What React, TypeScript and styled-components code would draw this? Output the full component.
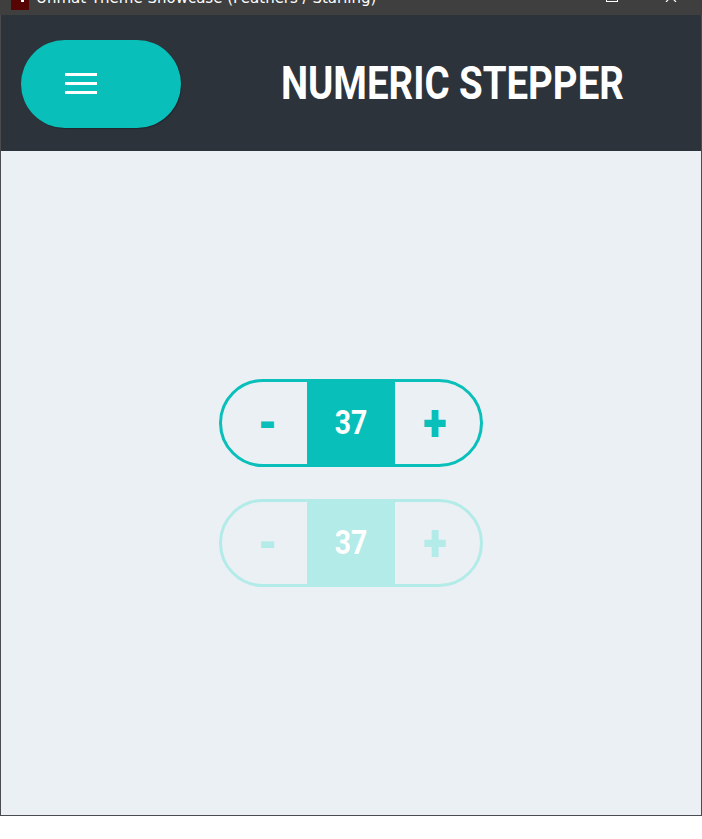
import React from "react";
import styled, { createGlobalStyle } from "styled-components";

const GlobalStyle = createGlobalStyle`
  html, body {
    margin: 0;
    padding: 0;
    background: #ffffff;
  }
  * {
    box-sizing: border-box;
  }
`;

const teal = "#08bfba";
const tealDisabled = "#b3ebe8";

const Window = styled.div`
  width: 702px;
  height: 816px;
  display: flex;
  flex-direction: column;
  font-family: Roboto, "Liberation Sans", sans-serif;
`;

const TitleBar = styled.div`
  height: 15px;
  background: #3f3f3f;
  display: flex;
  align-items: flex-start;
  overflow: hidden;
  padding-left: 11px;
`;

const AppIcon = styled.div`
  width: 18px;
  height: 18px;
  margin-top: -8px;
  background: #560404;
  position: relative;
  &::after {
    content: "";
    position: absolute;
    left: 10px;
    top: 7px;
    width: 3px;
    height: 3px;
    background: #ffffff;
  }
`;

const TitleText = styled.div`
  margin-left: 7px;
  margin-top: -12px;
  color: #ffffff;
  font-family: "DejaVu Sans", "Liberation Sans", sans-serif;
  font-size: 15px;
  line-height: 20px;
  white-space: nowrap;
`;

const Controls = styled.div`
  margin-left: auto;
  display: flex;
  align-items: flex-start;
  gap: 47px;
  padding-right: 25px;
  margin-top: -9px;
`;

const MaxBox = styled.div`
  width: 12px;
  height: 11px;
  border: 1px solid #ffffff;
`;

const CloseGlyph = styled.svg`
  width: 12px;
  height: 11px;
`;

const Frame = styled.div`
  flex: 1;
  display: flex;
  flex-direction: column;
  border: 1px solid #4a4c50;
  border-top: none;
`;

const Header = styled.header`
  height: 136px;
  background: #2c333b;
  display: flex;
  align-items: center;
  padding-left: 20px;
`;

const MenuButton = styled.button`
  width: 160px;
  height: 88px;
  border: none;
  border-radius: 44px;
  background: ${teal};
  box-shadow: 1px 1px 1px rgba(0, 0, 0, 0.25);
  display: flex;
  flex-direction: column;
  justify-content: center;
  gap: 6px;
  padding: 0 0 0 44px;
  margin-top: 1px;
  cursor: pointer;
`;

const MenuLine = styled.span`
  display: block;
  width: 32px;
  height: 3px;
  background: #ffffff;
`;

const TitleArea = styled.div`
  flex: 1;
  display: flex;
  justify-content: center;
  padding-left: 22px;
`;

const Title = styled.h1`
  margin: 0;
  color: #ffffff;
  font-family: Roboto, "Liberation Sans", sans-serif;
  font-weight: 700;
  font-size: 46px;
  line-height: 1;
  white-space: nowrap;
  display: inline-block;
  transform: scaleX(0.835);
`;

const Content = styled.main`
  flex: 1;
  background: #ebf0f4;
  display: flex;
  flex-direction: column;
  align-items: center;
  justify-content: center;
  gap: 32px;
  padding-bottom: 1px;
`;

const Stepper = styled.div<{ $disabled?: boolean }>`
  width: 264px;
  height: 88px;
  border: 3px solid ${(p) => (p.$disabled ? tealDisabled : teal)};
  border-radius: 44px;
  display: grid;
  grid-template-columns: 85px 88px 85px;
  overflow: hidden;
`;

const StepButton = styled.button<{ $disabled?: boolean; $side: "left" | "right" }>`
  border: none;
  background: transparent;
  color: ${(p) => (p.$disabled ? tealDisabled : teal)};
  font-family: Roboto, "Liberation Sans", sans-serif;
  cursor: ${(p) => (p.$disabled ? "default" : "pointer")};
  display: flex;
  align-items: center;
  justify-content: center;
  padding: 0;
  padding-${(p) => p.$side}: 6px;
  padding-top: 3px;
`;

const Sign = styled.span`
  display: inline-block;
  font-weight: 900;
  font-size: 52px;
  line-height: 1;
  transform: scaleX(0.84);
`;

const Value = styled.div<{ $disabled?: boolean }>`
  background: ${(p) => (p.$disabled ? tealDisabled : teal)};
  display: flex;
  align-items: center;
  justify-content: center;
`;

const ValueText = styled.span`
  display: inline-block;
  color: #ffffff;
  font-family: Roboto, "Liberation Sans", sans-serif;
  font-weight: 700;
  font-size: 33px;
  line-height: 1;
  transform: scaleX(0.86);
`;

const NumericStepper: React.FC<{ value: number; disabled?: boolean }> = ({ value, disabled }) => (
  <Stepper $disabled={disabled}>
    <StepButton $disabled={disabled} $side="left">
      <Sign>-</Sign>
    </StepButton>
    <Value $disabled={disabled}>
      <ValueText>{value}</ValueText>
    </Value>
    <StepButton $disabled={disabled} $side="right">
      <Sign>+</Sign>
    </StepButton>
  </Stepper>
);

export default function App() {
  return (
    <>
      <GlobalStyle />
      <Window>
        <TitleBar>
          <AppIcon />
          <TitleText>Unmat Theme Showcase (Feathers / Starling)</TitleText>
          <Controls>
            <MaxBox />
            <CloseGlyph viewBox="0 0 12 11">
              <path d="M1 0 L11 11 M11 0 L1 11" stroke="#ffffff" strokeWidth="1.2" fill="none" />
            </CloseGlyph>
          </Controls>
        </TitleBar>
        <Frame>
          <Header>
            <MenuButton aria-label="Menu">
              <MenuLine />
              <MenuLine />
              <MenuLine />
            </MenuButton>
            <TitleArea>
              <Title>NUMERIC STEPPER</Title>
            </TitleArea>
          </Header>
          <Content>
            <NumericStepper value={37} />
            <NumericStepper value={37} disabled />
          </Content>
        </Frame>
      </Window>
    </>
  );
}
